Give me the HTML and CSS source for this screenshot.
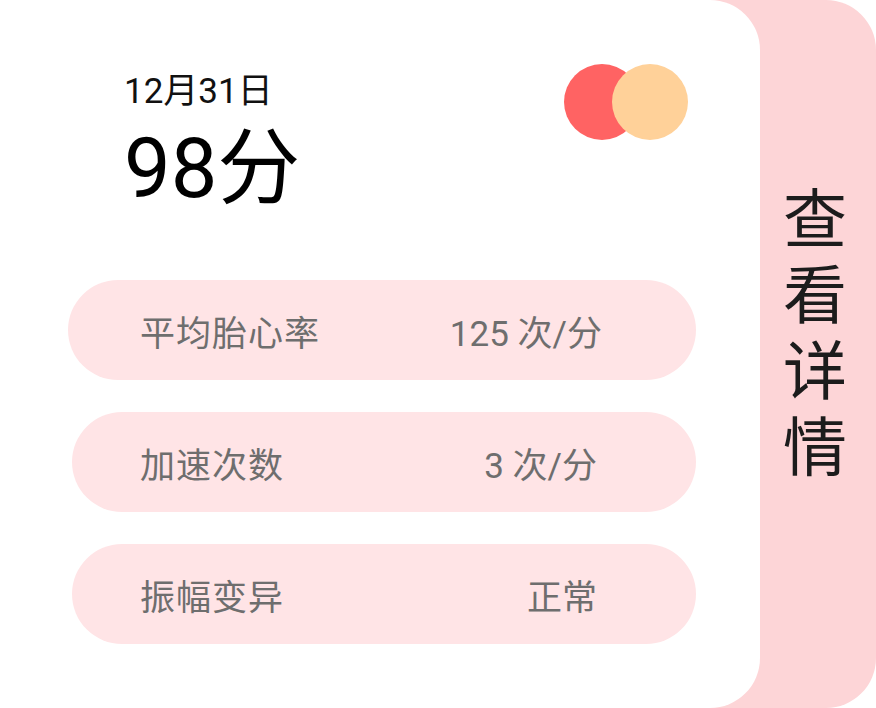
FILE: index.html
```html
<!DOCTYPE html>
<html lang="zh-CN">
<head>
<meta charset="utf-8">
<title>胎心报告</title>
<link rel="stylesheet" href="styles.css">
</head>
<body>
<div class="wrap">
  <div class="card">
    <div class="header">
      <div class="titles">
        <div class="date">12月31日</div>
        <div class="score">98分</div>
      </div>
      <div class="dots">
        <span class="dot dot-red"></span>
        <span class="dot dot-orange"></span>
      </div>
    </div>
    <div class="rows">
      <div class="row row-first">
        <span class="label">平均胎心率</span>
        <span class="value">125 次/分</span>
      </div>
      <div class="row">
        <span class="label">加速次数</span>
        <span class="value">3 次/分</span>
      </div>
      <div class="row">
        <span class="label">振幅变异</span>
        <span class="value">正常</span>
      </div>
    </div>
  </div>
  <div class="side">
    <div class="side-text">查看详情</div>
  </div>
</div>
</body>
</html>
```

FILE: styles.css
```css
* { box-sizing: border-box; }

html, body {
  margin: 0;
  padding: 0;
  background: #ffffff;
}

body {
  width: 876px;
  height: 708px;
  overflow: hidden;
  font-family: Roboto, "Noto Sans CJK SC", sans-serif;
}

.wrap {
  display: flex;
  width: 876px;
  height: 708px;
}

.card {
  position: relative;
  z-index: 1;
  flex: 0 0 760px;
  height: 708px;
  background: #ffffff;
  border-radius: 0 50px 50px 0;
  padding: 71px 64px 0 0;
}

.header {
  display: flex;
  justify-content: space-between;
  align-items: flex-start;
  padding-left: 124px;
  padding-right: 8px;
}

.titles {
  display: flex;
  flex-direction: column;
}

.date {
  font-size: 35px;
  line-height: 42px;
  color: #111111;
}

.score {
  margin-top: 7px;
  font-size: 83px;
  line-height: 98px;
  color: #000000;
}

.dots {
  display: flex;
  margin-top: -7px;
}

.dot {
  display: block;
  width: 76px;
  height: 76px;
  border-radius: 50%;
}

.dot-red {
  background: #ff6363;
}

.dot-orange {
  background: #ffd199;
  margin-left: -28px;
}

.rows {
  display: flex;
  flex-direction: column;
  gap: 32px;
  margin-top: 62px;
  padding-left: 72px;
}

.row {
  display: flex;
  justify-content: space-between;
  align-items: center;
  height: 100px;
  border-radius: 50px;
  background: #ffe4e6;
  padding: 0 99px 0 68px;
  font-size: 35px;
  color: #6e6e6e;
}

.label {
  letter-spacing: 1px;
}

.row-first {
  margin-left: -4px;
  padding-left: 72px;
  padding-right: 94px;
}

.side {
  flex: 0 0 216px;
  margin-left: -100px;
  height: 708px;
  background: #fdd5d7;
  border-radius: 0 50px 50px 0;
  display: flex;
  justify-content: center;
  align-items: flex-start;
  padding: 186px 6px 0 100px;
}

.side-text {
  writing-mode: vertical-rl;
  font-size: 64px;
  line-height: 64px;
  letter-spacing: 12px;
  color: #1c1c1c;
  font-family: "Noto Sans CJK SC", sans-serif;
}
```
